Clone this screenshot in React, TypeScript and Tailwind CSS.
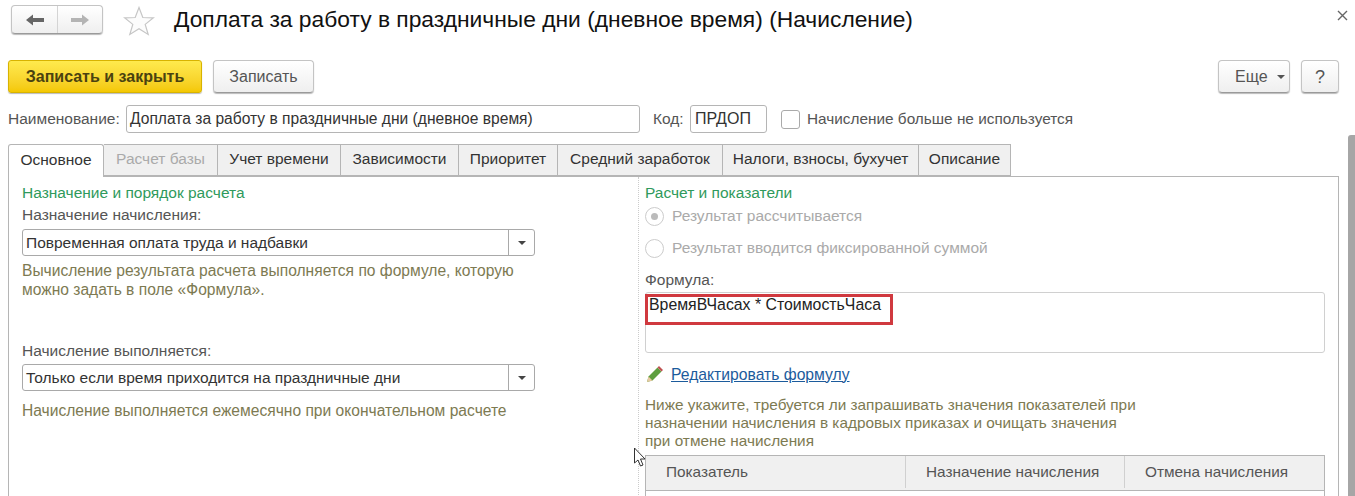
import React from 'react';

const tabs = [
    { name: 'Основное', w: 'w-[96px]' },
    { name: 'Расчет базы', w: 'w-[114px]' },
    { name: 'Учет времени', w: 'w-[123px]' },
    { name: 'Зависимости', w: 'w-[118px]' },
    { name: 'Приоритет', w: 'w-[99px]' },
    { name: 'Средний заработок', w: 'w-[165px]' },
    { name: 'Налоги, взносы, бухучет', w: 'w-[196px]' },
    { name: 'Описание', w: 'w-[92px]' },
];

const Btn: React.FC<{ className: string; children: React.ReactNode }> = ({ className, children }) => (
    <div className={`flex h-[33px] items-center rounded-[4px] border border-[#c4c4c4] border-b-[#9a9a9a] bg-linear-to-b from-white to-[#efefef] text-[16px] text-[#555] shadow-[0_1px_1px_#bbb] ${className}`}>
        {children}
    </div>
);

const Select: React.FC<{ value: string }> = ({ value }) => (
    <div className="flex h-[27px] w-[513px] items-center rounded-[3px] border border-[#a9a9a9] bg-white text-[#333]">
        <span className="flex-1 pl-[3px]">{value}</span>
        <span className="flex h-full w-[26px] items-center justify-center border-l border-[#a9a9a9]">
            <span className="h-0 w-0 border-x-[4px] border-t-[4px] border-x-transparent border-t-[#444]" />
        </span>
    </div>
);

const App: React.FC = () => {
    return (
        <div className="relative h-[496px] w-[1355px] overflow-hidden bg-white font-['Liberation_Sans',Arial,sans-serif] text-[15.5px] leading-[18px] text-[#555]">
            {/* заголовок */}
            <div className="flex h-[60px] items-start">
                <div className="mt-[5px] ml-[11px] flex h-[29px] w-[92px] rounded-[4px] border border-[#c4c4c4] border-b-[#9a9a9a] bg-linear-to-b from-white to-[#efefef] shadow-[0_1px_1px_#bbb]">
                    <div className="flex w-[46px] items-center justify-center border-r border-[#d4d4d4]">
                        <svg width="20" height="14" viewBox="0 0 20 14"><path d="M1 7 L8 1.5 V5 H19 V9 H8 V12.5 Z" fill="#666" /></svg>
                    </div>
                    <div className="flex flex-1 items-center justify-center">
                        <svg width="20" height="14" viewBox="0 0 20 14"><path d="M19 7 L12 1.5 V5 H1 V9 H12 V12.5 Z" fill="#b4b4b4" /></svg>
                    </div>
                </div>
                <svg className="mt-[6px] ml-[20px]" width="32" height="30" viewBox="0 0 32 30">
                    <path d="M16 1.5 L19.8 11.5 L30.5 11.8 L22.2 18.4 L25.2 28.5 L16 22.7 L6.8 28.5 L9.8 18.4 L1.5 11.8 L12.2 11.5 Z" fill="#fcfcfc" stroke="#c6c6c6" strokeWidth="1.2" />
                </svg>
                <h1 className="mt-[6px] ml-[19px] text-[22.8px] leading-[27px] font-normal whitespace-nowrap text-[#111]">
                    Доплата за работу в праздничные дни (дневное время) (Начисление)
                </h1>
                <svg className="mt-[10px] ml-auto mr-[7px]" width="11" height="11" viewBox="0 0 11 11">
                    <path d="M1 1 L10 10 M10 1 L1 10" stroke="#666" strokeWidth="1.4" />
                </svg>
            </div>

            {/* кнопки */}
            <div className="flex items-start pl-[8px] pr-[16px]">
                <div className="flex h-[33px] w-[194px] items-center justify-center rounded-[3px] border border-[#d8b300] bg-linear-to-b from-[#ffea4d] to-[#f4c800] text-[16px] font-bold text-[#4a4210] shadow-[0_1px_1px_#bbb]">
                    Записать и закрыть
                </div>
                <Btn className="ml-[11px] w-[101px] justify-center">Записать</Btn>
                <Btn className="ml-auto w-[72px] gap-[9px] pl-[16px]">
                    <span>Еще</span>
                    <span className="h-0 w-0 border-x-[4px] border-t-[4px] border-x-transparent border-t-[#555]" />
                </Btn>
                <Btn className="ml-[11px] w-[38px] justify-center text-[18px] text-[#333]">?</Btn>
            </div>

            {/* наименование */}
            <div className="mt-[12px] flex h-[28px] items-center pl-[8px]">
                <span className="w-[118px]">Наименование:</span>
                <div className="flex h-[28px] w-[514px] items-center rounded-[3px] border border-[#b5b5b5] pl-[3px] text-[15.6px] text-[#333]">
                    Доплата за работу в праздничные дни (дневное время)
                </div>
                <span className="ml-[13px] w-[37px]">Код:</span>
                <div className="flex h-[28px] w-[77px] items-center rounded-[3px] border border-[#b5b5b5] pl-[4px] text-[16px] text-[#333]">ПРДОП</div>
                <div className="ml-[14px] h-[19px] w-[19px] rounded-[3px] border border-[#aaa] bg-white" />
                <span className="ml-[7px] text-[15.35px]">Начисление больше не используется</span>
            </div>

            {/* вкладки */}
            <div className="mt-[11px] ml-[8px] flex h-[33px]">
                {tabs.map((t, i) => (
                    <div
                        key={t.name}
                        className={`flex items-center justify-center border border-[#b5b5b5] pb-[2px] ${t.w} ${
                            i === 0
                                ? 'z-10 h-[33px] rounded-t-[3px] border-b-0 bg-white text-[#333]'
                                : i === 1
                                  ? 'h-[32px] border-l-0 bg-[#f0f0f0] text-[#aaa]'
                                  : 'h-[32px] border-l-0 bg-[#f0f0f0] text-[#333]'
                        }`}
                    >
                        {t.name}
                    </div>
                ))}
            </div>

            {/* панель */}
            <div className="-mt-px ml-[8px] flex h-[330px] w-[1331px] border border-[#b5b5b5] bg-white">
                <div className="w-[629px] pt-[7px] pl-[13px]">
                    <div className="text-[#2f9a5c]">Назначение и порядок расчета</div>
                    <div className="mt-[4px]">Назначение начисления:</div>
                    <div className="mt-[5px]">
                        <Select value="Повременная оплата труда и надбавки" />
                    </div>
                    <div className="mt-[5px] w-[513px] text-[15.6px] leading-[19px] text-[#7d7a52]">
                        Вычисление результата расчета выполняется по формуле, которую можно задать в поле «Формула».
                    </div>
                    <div className="mt-[43px]">Начисление выполняется:</div>
                    <div className="mt-[4px]">
                        <Select value="Только если время приходится на праздничные дни" />
                    </div>
                    <div className="mt-[11px] text-[15.6px] text-[#7d7a52]">Начисление выполняется ежемесячно при окончательном расчете</div>
                </div>

                <div className="border-l border-dotted border-[#ccc] pt-[7px] pl-[6px]">
                    <div className="text-[#2f9a5c]">Расчет и показатели</div>
                    <div className="mt-[3px] flex h-[22px] items-center text-[#aaa]">
                        <span className="mr-[8px] flex h-[19px] w-[19px] items-center justify-center rounded-full border border-[#ccc]">
                            <span className="h-[7px] w-[7px] rounded-full bg-[#bbb]" />
                        </span>
                        Результат рассчитывается
                    </div>
                    <div className="mt-[10px] flex h-[22px] items-center text-[#aaa]">
                        <span className="mr-[8px] h-[19px] w-[19px] rounded-full border border-[#ccc]" />
                        Результат вводится фиксированной суммой
                    </div>
                    <div className="mt-[12px]">Формула:</div>
                    <div className="relative mt-[3px] h-[61px] w-[680px] rounded-[3px] border border-[#d0d0d0] pt-[3px] pl-[3px] text-[15.85px] text-[#222]">
                        ВремяВЧасах * СтоимостьЧаса
                        <div className="absolute -top-px -left-px mt-[2px] h-[31px] w-[248px] border-[3px] border-[#d0393f]" />
                    </div>
                    <div className="mt-[12px] flex items-center">
                        <svg className="mr-[7px]" width="19" height="19" viewBox="0 0 19 19">
                            <path d="M2 17 L3.5 11.5 L12.5 2.5 L16.5 6.5 L7.5 15.5 Z" fill="#5d9e3f" />
                            <path d="M2 17 L3.5 11.5 L7.5 15.5 Z" fill="#e7c9a0" />
                            <path d="M12.5 2.5 L14 1 L18 5 L16.5 6.5 Z" fill="#c05050" />
                        </svg>
                        <span className="text-[15.7px] text-[#1c5b9c] underline">Редактировать формулу</span>
                    </div>
                    <div className="mt-[12px] text-[15.35px] whitespace-nowrap text-[#7d7a52]">
                        Ниже укажите, требуется ли запрашивать значения показателей при
                        <br />
                        назначении начисления в кадровых приказах и очищать значения
                        <br />
                        при отмене начисления
                    </div>
                    <div className="mt-[5px] w-[680px] border-x border-[#b5b5b5]">
                        <div className="flex h-[36px] border-y border-[#b5b5b5] bg-[#f0f0f0] pb-[2px] text-[15.35px]">
                            <div className="flex w-[260px] items-center border-r border-[#d0d0d0] pl-[20px]">Показатель</div>
                            <div className="flex w-[219px] items-center border-r border-[#d0d0d0] pl-[20px]">Назначение начисления</div>
                            <div className="flex flex-1 items-center pl-[20px]">Отмена начисления</div>
                        </div>
                        <div className="h-[20px]" />
                    </div>
                </div>
            </div>

            {/* курсор и полоса прокрутки поверх панели */}
            <svg className="absolute top-[447px] left-[633px]" width="14" height="21" viewBox="0 0 14 21">
                <path d="M1.5 1 V16 L5 13 L7.5 19 L10 18 L7.5 12 L12 12 Z" fill="#fff" stroke="#333" strokeWidth="1" />
            </svg>
            <div className="absolute top-[135px] right-0 h-[361px] w-[7px] rounded-tl-[3px] bg-[#a6a6a6]" />
        </div>
    );
};

export default App;
